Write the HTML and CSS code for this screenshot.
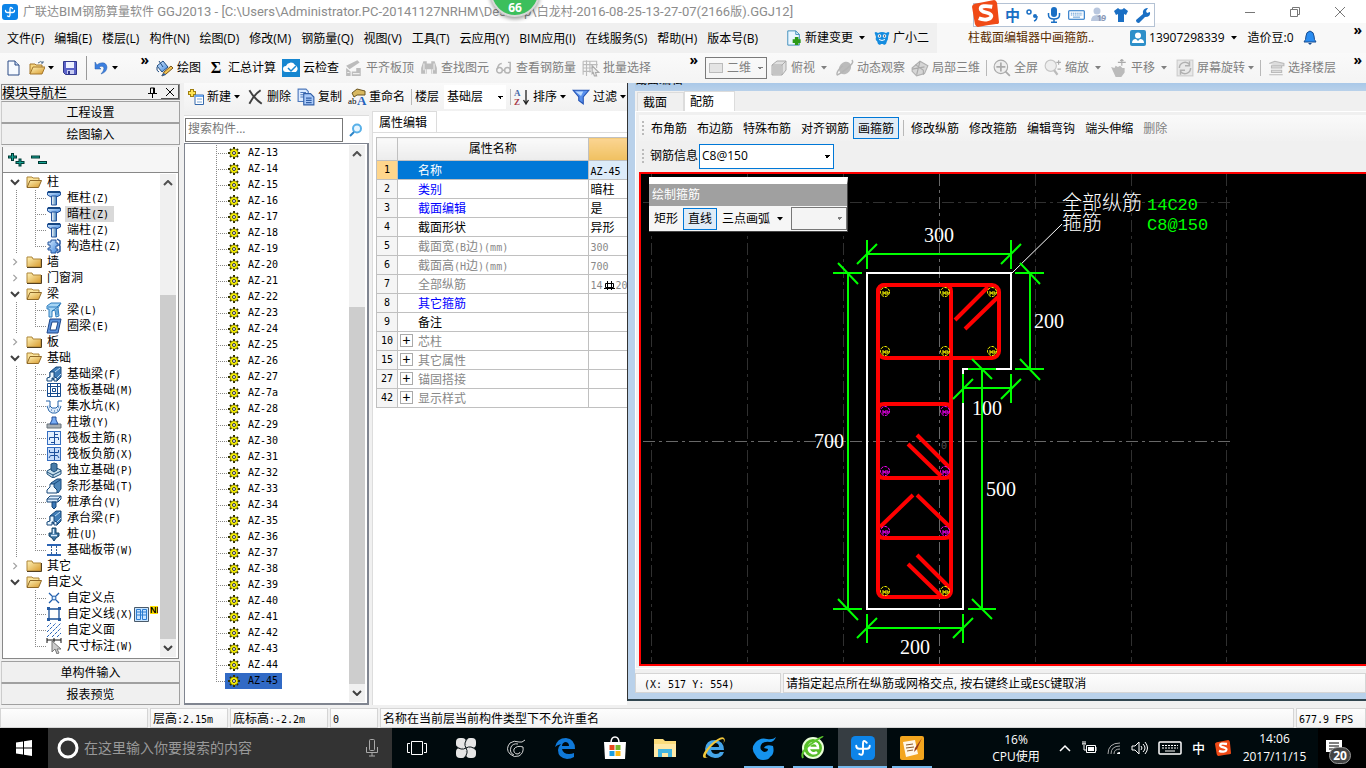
FILE: index.html
```html
<!DOCTYPE html>
<html lang="zh-CN">
<head>
<meta charset="utf-8">
<title>广联达BIM钢筋算量软件 GGJ2013</title>
<link rel="stylesheet" href="styles.css">
</head>
<body>
<svg class="defs" aria-hidden="true">
<defs>
<linearGradient id="gold" x1="0" y1="0" x2="1" y2="1"><stop offset="0" stop-color="#fff3b8"/><stop offset="1" stop-color="#d89a2c"/></linearGradient>
<linearGradient id="blue" x1="0" y1="0" x2="1" y2="1"><stop offset="0" stop-color="#d8ecff"/><stop offset="1" stop-color="#3f86dc"/></linearGradient>
<linearGradient id="steel" x1="0" y1="0" x2="1" y2="0"><stop offset="0" stop-color="#fff"/><stop offset="1" stop-color="#3f7fb8"/></linearGradient>
</defs>
<symbol id="logo" viewBox="0 0 16 16"><rect width="16" height="16" rx="3" fill="#0d84e8"/><path d="M10.500 4.500Q8 2 8 5v5.500q0 3-2.500 1.500M3.500 6.500q0 2 2 2h5q2 0 2-2" fill="none" stroke="#fff" stroke-width="1.300" stroke-linecap="round"/></symbol>
<symbol id="arrow" viewBox="0 0 6 4"><path d="M0 0h6L3 3.500z" fill="currentColor"/></symbol>
<symbol id="new" viewBox="0 0 16 16"><path d="M3 1h7l4 4v10H3z" fill="#f6faff" stroke="#2b4a85"/><path d="M10 1v4h4" fill="#c5d6ef" stroke="#2b4a85"/></symbol>
<symbol id="open" viewBox="0 0 16 16"><path d="M1 14V4h5l1 1h6v3" fill="#f6d680" stroke="#a5762a"/><path d="M1 14l3-7h12l-3 7z" fill="url(#gold)" stroke="#a5762a"/><path d="M9 3q3-3 5 0m0-2v2h-2" fill="none" stroke="#54718f"/></symbol>
<symbol id="save" viewBox="0 0 16 16"><path d="M1.500 1.500h13v13h-11l-2-2z" fill="#5b63c8" stroke="#30378c"/><path d="M4 2h8v6H4z" fill="#eef1ff"/><path d="M5 10h7v4H5z" fill="#c8cdf2"/><path d="M6 11h2v3H6z" fill="#30378c"/></symbol>
<symbol id="undo" viewBox="0 0 16 16"><path d="M2 2v7h6L6 7q4-2 5 1 0 3-3 6 6-2 6-7-1-5-6-4-2 0-4 2z" fill="#3c7fe0" stroke="#265ca8" stroke-width=".5"/></symbol>
<symbol id="paint" viewBox="0 0 18 16"><path d="M1 6l6-5 5 6-6 5z" fill="url(#blue)" stroke="#1f4b80"/><path d="M3 1l4 6M1 7q-1 4 2 5" fill="none" stroke="#1f4b80"/><path d="M8 12l7-6 2 2-7 6-4 2z" fill="#f4c451" stroke="#775318"/><path d="M8 13l-3 3 5-1" fill="#275eaa"/></symbol>
<symbol id="cloud" viewBox="0 0 18 18"><rect width="18" height="18" fill="#1686d0"/><path d="M4 13a3 3 0 0 1 0-6 5 5 0 0 1 9-1 4 4 0 0 1 1 7z" fill="#fff"/><path d="M6 9l3 3 5-5" fill="none" stroke="#1686d0" stroke-width="1.500"/></symbol>
<symbol id="align" viewBox="0 0 16 16"><path d="M1 6l10-5 2 2-9 6zM1 8l4 3v4H1zM6 11h4V8h4v7H6z" fill="#bcbcbc"/><path d="M7 13h6M2 12h2" stroke="#eee"/></symbol>
<symbol id="bino" viewBox="0 0 16 16"><path d="M3 2h3v2h4V2h3l2 6v5h-5V9H6v4H1V8z" fill="#bdbdbd"/><path d="M3.500 4v6m9-6v6M5 13V9m6 4V9" stroke="#eee"/></symbol>
<symbol id="glasses" viewBox="0 0 16 16"><g fill="none" stroke="#b5b5b5" stroke-width="1.300"><circle cx="4" cy="10" r="2.500"/><circle cx="11" cy="10" r="2.500"/><path d="M2 9q1-5 4-5M7 10h2M13.500 10V3h-2"/></g></symbol>
<symbol id="batch" viewBox="0 0 16 16"><path d="M1 2v12M4 1v14M7 2v10M1 5h13M1 8h8M1 11h7M1 2h12v6" fill="none" stroke="#bbb"/><path d="M9 6l6 6h-3l1 3-2 0-1-3-1 1z" fill="#eee" stroke="#aaa"/></symbol>
<symbol id="cube" viewBox="0 0 18 18"><path d="M2 6l5-4h9v9l-4 5H2z" fill="#e0e0e0" stroke="#aaa"/><path d="M2 6h10v10M12 6l4-4" fill="none" stroke="#aaa"/><path d="M3 7h8v8H3z" fill="#c4c4c4"/></symbol>
<symbol id="orbit" viewBox="0 0 16 16"><ellipse cx="8" cy="8" rx="5" ry="6" transform="rotate(40 8 8)" fill="#bbb"/><path d="M14 1q3 2-5 8t-8 5q-1-3 5-8" fill="none" stroke="#b5b5b5" stroke-width="1.300"/></symbol>
<symbol id="part" viewBox="0 0 16 16"><path d="M1 8l7-6 7 4-3 7-7 2-4-4z" fill="#d6d6d6" stroke="#b0b0b0"/><path d="M4 5l7 5v4M8 2l-3 12M1 9l11-2" fill="none" stroke="#aaa"/></symbol>
<symbol id="full" viewBox="0 0 16 16"><circle cx="7" cy="7" r="6" fill="#eee" stroke="#aaa"/><path d="M7 3v8M3 7h8M11 11l4 4" stroke="#aaa" stroke-width="1.500"/></symbol>
<symbol id="mag" viewBox="0 0 16 16"><circle cx="6" cy="6" r="5" fill="#eee" stroke="#c5c5c5"/><path d="M9 10l3 4" stroke="#bbb" stroke-width="2"/><path d="M11 3h4m-2-2v4m-1 4h3" stroke="#aaa"/></symbol>
<symbol id="pan" viewBox="0 0 16 16"><path d="M1 7l3 1 1-2 2 1 2-1 2 2 2 0v4l-3 4H5z" fill="#bbb"/><path d="M10.500 0v6M7 3h7M9 1.500l1.500-1 1.500 1" fill="none" stroke="#aaa"/></symbol>
<symbol id="rotate" viewBox="0 0 16 16"><rect x="1" y="1" width="14" height="14" fill="#e8e8e8" stroke="#ccc"/><path d="M3 8a5 5 0 0 1 9-3m1 3a5 5 0 0 1-9 3M12 2v4H8M4 14v-4h4" fill="none" stroke="#b0b0b0" stroke-width="1.300"/></symbol>
<symbol id="floors" viewBox="0 0 16 16"><path d="M2 4l5-2 8 2v2H7M4 6h9v2H4zM4 10h9v2H4zM2 14h12" fill="#ddd" stroke="#bbb"/></symbol>
<symbol id="create" viewBox="0 0 16 16"><path d="M4 0v8M0 4h8" stroke="#a08010" stroke-width="4"/><path d="M4 1v6M1 4h6" stroke="#ffe552" stroke-width="2"/><path d="M7 6h8.500v9.500H7z" fill="#fff" stroke="#3569ac"/><path d="M7 7h8" stroke="#69a5ee" stroke-width="2"/><path d="M9 10h5M9 13h5" stroke="#78a4d4"/></symbol>
<symbol id="delete" viewBox="0 0 16 16"><path d="M3 2q4 7 11 12M13 2Q7 6 3 14" fill="none" stroke="#404040" stroke-width="1.700"/></symbol>
<symbol id="copy" viewBox="0 0 16 16"><path d="M1 1h7l2 2v9H1z" fill="#dcebff" stroke="#4d78bb"/><path d="M3 4h5M3 6h5M3 8h5" stroke="#4d78bb"/><path d="M6 5h6l3 3v7H6z" fill="#a9c9f8" stroke="#315fa8"/><path d="M8 9h5M8 11h5M8 13h5" stroke="#315fa8"/></symbol>
<symbol id="filter" viewBox="0 0 16 16"><path d="M1 2h14L10 8v6l-4-3V8z" fill="#5990ed" stroke="#2554b4"/><path d="M3 3h7L8 7" fill="#bddbff"/></symbol>
<symbol id="docplus" viewBox="0 0 16 18"><path d="M1 1h9l4 4v12H1z" fill="#eaf6ff" stroke="#3286b8"/><path d="M10 1v4h4" fill="none" stroke="#3286b8"/><path d="M11 8v9M6.500 12.500h9" stroke="#2c9a18" stroke-width="4"/></symbol>
<symbol id="mascot" viewBox="0 0 16 16"><path d="M1 4q-1-2 1-2l2 1q4-2 8 0l2-1q2 0 1 2-1 2-1 4 0 2-1 3l-1 3-2 1-1-1H7l-1 1-2-1-1-3Q1 10 2 7z" fill="#158cdf"/><circle cx="5.500" cy="6" r="1.800" fill="#fff"/><circle cx="10.500" cy="6" r="1.800" fill="#fff"/><circle cx="5.500" cy="6" r=".8" fill="#124"/><circle cx="10.500" cy="6" r=".8" fill="#124"/><path d="M5 9.500q3 2 6 0" stroke="#fff" fill="none"/></symbol>
<symbol id="user" viewBox="0 0 16 16"><rect width="16" height="16" rx="2" fill="#2d8fc9"/><circle cx="8" cy="5.500" r="3" fill="#fff"/><path d="M2 13q0-4 4-4l2 2 2-2q4 0 4 4z" fill="#fff"/></symbol>
<symbol id="bell" viewBox="0 0 16 16"><path d="M2 12q2-2 2-6 0-4 4-5 4 1 4 5 0 4 2 6z" fill="#2a8cf0" stroke="#174d91"/><path d="M6 13h4l-2 2z" fill="#174d91"/></symbol>
<symbol id="folder" viewBox="0 0 16 16"><path d="M1 13V3h5l1 2h8v8z" fill="url(#gold)" stroke="#ad8538"/><path d="M1 13.500h14.500V5" fill="none" stroke="#544020"/></symbol>
<symbol id="folder-open" viewBox="0 0 16 16"><path d="M1 13V3h5l1 1h6v3" fill="#fbe39a" stroke="#ad8538"/><path d="M1 13.500l3-7h11.500l-3 7z" fill="url(#gold)" stroke="#8f6928"/></symbol>
<symbol id="down" viewBox="0 0 10 6"><path d="M1 1l4 4 4-4" fill="none" stroke="#404040" stroke-width="2"/></symbol>
<symbol id="up" viewBox="0 0 10 6"><path d="M1 5l4-4 4 4" fill="none" stroke="#505050" stroke-width="2"/></symbol>
<symbol id="right" viewBox="0 0 6 10"><path d="M1 1l4 4-4 4" fill="none" stroke="#a0a0a0" stroke-width="1.500"/></symbol>
<symbol id="column" viewBox="0 0 16 16"><path d="M1.500 2h13v3l-4 2H5L1.500 5z" fill="url(#blue)" stroke="#24549c"/><path d="M5.500 6h5v9h-5z" fill="url(#steel)" stroke="#24549c"/><path d="M2 2h12" stroke="#174783" stroke-width="2"/></symbol>
<symbol id="gear2" viewBox="0 0 16 16"><path d="M5 2h5v3h2v3h-2v3h2v2h-2v2H5v-3H2v-2h2V7H2V4h3z" fill="url(#blue)" stroke="#24549c"/><path d="M11 1l3 2v3l-1 1 1 1v5l-3 2" fill="none" stroke="#24549c" stroke-width="1.500"/></symbol>
<symbol id="beam" viewBox="0 0 16 16"><path d="M1 4l4-3h10l-3 5 1 8-3 1-1-7-3 1v6H3V7L1 7z" fill="#a5d5f5" stroke="#2f7dbd"/><path d="M2 5h9l3-3M6 9l6-4M11 7v6" fill="none" stroke="#2f7dbd"/></symbol>
<symbol id="ring" viewBox="0 0 16 16"><path d="M4 1h11l-3 14H1z" fill="#5c93dc" stroke="#1d4689"/><path d="M6 4h6l-2 8H4z" fill="#fff" stroke="#1d4689"/></symbol>
<symbol id="fbeam" viewBox="0 0 16 16"><path d="M4 12V6l6-5h5v10l-4 4z" fill="#3f7cb6" stroke="#164779"/><path d="M1 15v-3l3-1V6h4v5l3 1v3H8v-3H6v3z" fill="#e8f6ff" stroke="#164779"/><path d="M9 6l5-4M11 12l4-4" stroke="#bcdcf5"/></symbol>
<symbol id="strip" viewBox="0 0 16 16"><path d="M5 9V5l6-4h4v10l-3 4z" fill="#4d86ba" stroke="#164779"/><path d="M1 15v-3l3-3V6h4v3l3 3v3z" fill="#f2f9ff" stroke="#164779"/><path d="M8 6l6-4" stroke="#164779"/></symbol>
<symbol id="raft" viewBox="0 0 16 16"><path d="M1.500 1.500h13v13h-13zM4.500 1v14M11.500 1v14M1 4.500h14M1 11.500h14M6.500 6.500h3v3h-3z" fill="none" stroke="#164b8e"/></symbol>
<symbol id="pit" viewBox="0 0 16 16"><path d="M1 7h3l2 3h4l2-3h3l-3 6-4 2-4-2z" fill="#dceafa"/><path d="M0 3h4v5l2 2h4l2-2V3h4M1 8l2 5 3 2h4l3-2 2-5" fill="none" stroke="#2463a9"/><path d="M5 12h1m2 1h1m2-1h1m-9-3h1m8 0h1" stroke="#2463a9"/></symbol>
<symbol id="pier" viewBox="0 0 16 16"><path d="M1 10h14v4H1z" fill="#a8afb5" stroke="#68727a"/><path d="M4 10l2-4V3h4v3l2 4z" fill="#79adf5" stroke="#244f98"/></symbol>
<symbol id="rebar" viewBox="0 0 16 16"><rect x="1.500" y="1.500" width="13" height="13" fill="#e3f0ff" stroke="#356ec1"/><path d="M8.500 2v12M8 4.500h4M5 12.500h4M3.500 10V7.500h9V10" fill="none" stroke="#1d4f9b"/></symbol>
<symbol id="rebar-neg" viewBox="0 0 16 16"><rect x="1.500" y="1.500" width="13" height="13" fill="#c6dcfa" stroke="#356ec1"/><path d="M8.500 2v12M3.500 4v2.500h9V4M3 12l1.500-2.500h7L13 12" fill="none" stroke="#1d4f9b"/></symbol>
<symbol id="pad" viewBox="0 0 16 16"><path d="M1 9l7-4 7 3v4l-8 4-6-4z" fill="#c7dfed" stroke="#1c4e7a"/><path d="M5 2l3-1 3 1v6l-3 2-3-2z" fill="#487ca9" stroke="#1c4e7a"/><path d="M1 10l6 3 8-4M7 13v3" fill="none" stroke="#1c4e7a"/></symbol>
<symbol id="cap" viewBox="0 0 16 16"><path d="M1 5l3-3h11v3l-3 3H1z" fill="#dcedff" stroke="#164779"/><path d="M1 5h11v3M12 5l3-3" fill="none" stroke="#164779"/><path d="M6 8h4v5l-2 2-2-2z" fill="#3c78b8" stroke="#164779"/></symbol>
<symbol id="pile" viewBox="0 0 16 16"><path d="M6 2h4v5h3v3l-3 2-2 3-2-3-3-2V7h3z" fill="#39709f" stroke="#174568"/><path d="M7.500 3v5M5 9.500h6" stroke="#dcefff" stroke-width="1.500"/></symbol>
<symbol id="band" viewBox="0 0 16 16"><path d="M1 3h14M1 13h14" stroke="#2b64b5" stroke-width="2"/><path d="M5.500 4v9M10.500 4v9" stroke="#365f93" stroke-dasharray="2 1"/></symbol>
<symbol id="point" viewBox="0 0 16 16"><path d="M3 3l10 10M13 3L3 13" stroke="#1e5cab" stroke-width="1.300"/><circle cx="8" cy="8" r="2" fill="#d4ebff" stroke="#1e5cab"/></symbol>
<symbol id="poly" viewBox="0 0 16 16"><path d="M3 3h10v10H3z" fill="#fff" stroke="#194f95" stroke-width="1.300"/><path d="M1 1h3v3H1zM12 1h3v3h-3zM1 12h3v3H1zM12 12h3v3h-3z" fill="#255ba3"/></symbol>
<symbol id="hatch" viewBox="0 0 16 16"><path d="M1 5l4-4M1 10l9-9M1 15L15 1M6 15l9-9M11 15l4-4" stroke="#2864b8" stroke-dasharray="3 1"/></symbol>
<symbol id="dim" viewBox="0 0 16 16"><path d="M1 2h14M1 0v5M15 0v5M8 0v4" stroke="#111"/><path d="M6 3l9 8h-4l2 4-2 1-2-5-3 3z" fill="#ccc" stroke="#777"/></symbol>
<symbol id="az" viewBox="0 0 12 12"><path d="M6 0v12M0 6h12M2 2l8 8M10 2l-8 8" stroke="#333300" stroke-width="2"/><circle cx="6" cy="6" r="4" fill="#f5ef00" stroke="#4a4600" stroke-dasharray="1 1"/><circle cx="6" cy="6" r="1.500" fill="#fff" stroke="#333"/></symbol>
<symbol id="sogou" viewBox="0 0 28 28"><path d="M3 4q9-2 20-4 2 0 3 3l2 20q0 2-3 2-9 1-19 3-2 0-3-3L0 7q0-2 3-3z" fill="#f04a16"/><path d="M21 7q-12-2-12 2c0 5 12 3 11 8-1 4-8 4-13 2" fill="none" stroke="#fff" stroke-width="4"/></symbol>
<symbol id="mic" viewBox="0 0 16 16"><rect x="5" y="0" width="6" height="10" rx="3" fill="currentColor"/><path d="M2.500 6v2q0 4 5.500 4t5.500-4V6M8 12v3M5 15.200h6" fill="none" stroke="currentColor" stroke-width="1.500"/></symbol>
<symbol id="keys" viewBox="0 0 24 14"><rect x="1" y="1" width="22" height="12" rx="1" fill="none" stroke="currentColor" stroke-width="1.500"/><path d="M4 4.500h16M4 7h16" stroke="currentColor" stroke-dasharray="2 1"/><path d="M7 10h10" stroke="currentColor"/></symbol>
<symbol id="bar" viewBox="-6 -6 12 12"><circle r="4.500" fill="none" stroke="currentColor" stroke-dasharray="3 1"/><path d="M-3 0h2v2h-2M0 0h3v2H0z" fill="none" stroke="currentColor"/></symbol>
</svg>

<header class="titlebar">
  <svg class="i16"><use href="#logo"/></svg>
  <h1><span>广联达</span>BIM<span>钢筋算量软件</span> GGJ2013 - [C:\Users\Administrator.PC-20141127NRHM\Desktop\<span>白龙村</span>-2016-08-25-13-27-07(2166<span>版</span>).GGJ12]</h1>
  <div class="window-controls">
    <button aria-label="最小化"><svg width="10" height="10"><path d="M0 5.500h10" stroke="#777"/></svg></button>
    <button aria-label="还原"><svg width="10" height="10"><path d="M.5 2.500h7v7h-7zM2.500 2V.5h7v7H8" fill="none" stroke="#777"/></svg></button>
    <button aria-label="关闭"><svg width="10" height="10"><path d="M0 0l10 10M10 0L0 10" stroke="#777"/></svg></button>
  </div>
</header>
<div class="ball">66</div>
<div class="ime">
  <svg class="ime-logo"><use href="#sogou"/></svg>
  <b>中</b>
  <svg width="14" height="14"><circle cx="3" cy="4" r="2" fill="none" stroke="currentColor" stroke-width="1.500"/><circle cx="9" cy="8" r="2" fill="currentColor"/><path d="M11 8q0 4-3 5" fill="none" stroke="currentColor" stroke-width="1.500"/></svg>
  <svg class="i16"><use href="#mic"/></svg>
  <svg width="17" height="12"><use href="#keys"/></svg>
  <svg class="pale" width="16" height="16"><circle cx="6" cy="4" r="3.500" fill="currentColor"/><path d="M0 14q0-6 6-6t6 6z" fill="currentColor"/><text x="6" y="14" font-size="8" font-weight="700" fill="#8797b5">19</text></svg>
  <svg width="16" height="16"><path d="M5 1q3 3 6 0l4 3-2 4-2-1v8H5V7L3 8 1 4z" fill="currentColor"/></svg>
  <svg width="16" height="16"><path d="M1 13l7-6q-1-5 4-6l1 0-2 3 1 2 3-1q1 5-5 5l-6 6q-3 0-3-3z" fill="currentColor"/></svg>
</div>

<nav class="menubar">
  <div class="menus">
    <button>文件(F)</button><button>编辑(E)</button><button>楼层(L)</button><button>构件(N)</button><button>绘图(D)</button><button>修改(M)</button><button>钢筋量(Q)</button><button>视图(V)</button><button>工具(T)</button><button>云应用(Y)</button><button>BIM应用(I)</button><button>在线服务(S)</button><button>帮助(H)</button><button>版本号(B)</button>
  </div>
  <button class="tool"><svg class="i16"><use href="#docplus"/></svg>新建变更<svg class="arr"><use href="#arrow"/></svg></button>
  <button class="tool"><svg class="i16"><use href="#mascot"/></svg>广小二</button>
  <a class="news" href="#">柱截面编辑器中画箍筋..</a>
  <div class="account">
    <button class="tool"><svg class="i16"><use href="#user"/></svg>13907298339<svg class="arr"><use href="#arrow"/></svg></button>
    <span>造价豆:0</span>
    <svg class="bell"><use href="#bell"/></svg>
    <button class="more">»</button>
  </div>
</nav>

<div class="toolbar main-tools">
  <div class="group files">
    <button class="tool" aria-label="新建"><svg class="i16"><use href="#new"/></svg></button>
    <button class="tool" aria-label="打开"><svg class="i16"><use href="#open"/></svg><svg class="arr tight"><use href="#arrow"/></svg></button>
    <button class="tool" aria-label="保存"><svg class="i16"><use href="#save"/></svg></button>
    <i class="sep"></i>
    <button class="tool" aria-label="撤销"><svg class="i16"><use href="#undo"/></svg><svg class="arr tight"><use href="#arrow"/></svg></button>
    <button class="more">»</button>
  </div>
  <div class="group edits">
    <button class="tool"><svg class="i18"><use href="#paint"/></svg>绘图</button>
    <button class="tool"><b class="sigma">Σ</b>汇总计算</button>
    <button class="tool"><svg class="i18"><use href="#cloud"/></svg>云检查</button>
    <button class="tool" disabled><svg class="i18"><use href="#align"/></svg>平齐板顶</button>
    <button class="tool" disabled><svg class="i18"><use href="#bino"/></svg>查找图元</button>
    <button class="tool" disabled><svg class="i18"><use href="#glasses"/></svg>查看钢筋量</button>
    <button class="tool" disabled><svg class="i18"><use href="#batch"/></svg>批量选择</button>
    <button class="more">»</button>
  </div>
  <div class="group views">
    <label class="view-mode"><i></i><select aria-label="视图" disabled><option>二维</option></select></label>
    <button class="tool" disabled><svg class="i18"><use href="#cube"/></svg>俯视<svg class="arr"><use href="#arrow"/></svg></button>
    <button class="tool" disabled><svg class="i18"><use href="#orbit"/></svg>动态观察</button>
    <button class="tool" disabled><svg class="i18"><use href="#part"/></svg>局部三维</button>
    <i class="sep"></i>
    <button class="tool" disabled><svg class="i18"><use href="#full"/></svg>全屏</button>
    <button class="tool" disabled><svg class="i18"><use href="#mag"/></svg>缩放<svg class="arr"><use href="#arrow"/></svg></button>
    <button class="tool" disabled><svg class="i18"><use href="#pan"/></svg>平移<svg class="arr"><use href="#arrow"/></svg></button>
    <button class="tool" disabled><svg class="i18"><use href="#rotate"/></svg>屏幕旋转<svg class="arr tight"><use href="#arrow"/></svg></button>
    <i class="sep"></i>
    <button class="tool" disabled><svg class="i18"><use href="#floors"/></svg>选择楼层</button>
    <button class="more">»</button>
  </div>
</div>

<main class="workspace">
  <aside class="nav">
    <div class="nav-head"><h2>模块导航栏</h2>
      <button class="pin" aria-label="固定"><svg width="9" height="11"><path d="M2.500 6V1h4v5M5.500 1v5M0 6.500h9M4.500 7v4" fill="none" stroke="#000"/></svg></button>
      <button class="shut" aria-label="关闭"><svg width="8" height="8"><path d="M0 0l8 8M8 0L0 8" stroke="#000"/></svg></button></div>
    <button class="section">工程设置</button>
    <button class="section">绘图输入</button>
    <div class="nav-box">
      <div class="expanders">
        <button aria-label="全部展开"><svg width="18" height="16"><path d="M4.500 1v8M0 5h9M12 6.500v8M7.500 10.500h9" stroke="#003a34" stroke-width="3"/><path d="M4.500 2v6M1 5h7M12 7.500v6M8.500 10.500h7" stroke="#16a596"/></svg></button>
        <button aria-label="全部折叠"><svg width="18" height="16"><path d="M0 5h9M7 10.500h9" stroke="#003a34" stroke-width="3"/><path d="M1 5h7M8 10.500h7" stroke="#16a596"/></svg></button>
      </div>
      <div class="scroll-area">
        <ul class="tree">
          <li><div class="node"><svg class="exp"><use href="#down"/></svg><svg class="i16"><use href="#folder-open"/></svg>柱</div>
            <ul>
              <li><svg class="i16"><use href="#column"/></svg><span>框柱<tt>(Z)</tt></span></li>
              <li><svg class="i16"><use href="#column"/></svg><span class="current">暗柱<tt>(Z)</tt></span></li>
              <li><svg class="i16"><use href="#column"/></svg><span>端柱<tt>(Z)</tt></span></li>
              <li><svg class="i16"><use href="#gear2"/></svg><span>构造柱<tt>(Z)</tt></span></li>
            </ul></li>
          <li><div class="node"><svg class="exp"><use href="#right"/></svg><svg class="i16"><use href="#folder"/></svg>墙</div></li>
          <li><div class="node"><svg class="exp"><use href="#right"/></svg><svg class="i16"><use href="#folder"/></svg>门窗洞</div></li>
          <li><div class="node"><svg class="exp"><use href="#down"/></svg><svg class="i16"><use href="#folder-open"/></svg>梁</div>
            <ul>
              <li><svg class="i16"><use href="#beam"/></svg><span>梁<tt>(L)</tt></span></li>
              <li><svg class="i16"><use href="#ring"/></svg><span>圈梁<tt>(E)</tt></span></li>
            </ul></li>
          <li><div class="node"><svg class="exp"><use href="#right"/></svg><svg class="i16"><use href="#folder"/></svg>板</div></li>
          <li><div class="node"><svg class="exp"><use href="#down"/></svg><svg class="i16"><use href="#folder-open"/></svg>基础</div>
            <ul>
              <li><svg class="i16"><use href="#fbeam"/></svg><span>基础梁<tt>(F)</tt></span></li>
              <li><svg class="i16"><use href="#raft"/></svg><span>筏板基础<tt>(M)</tt></span></li>
              <li><svg class="i16"><use href="#pit"/></svg><span>集水坑<tt>(K)</tt></span></li>
              <li><svg class="i16"><use href="#pier"/></svg><span>柱墩<tt>(Y)</tt></span></li>
              <li><svg class="i16"><use href="#rebar"/></svg><span>筏板主筋<tt>(R)</tt></span></li>
              <li><svg class="i16"><use href="#rebar-neg"/></svg><span>筏板负筋<tt>(X)</tt></span></li>
              <li><svg class="i16"><use href="#pad"/></svg><span>独立基础<tt>(P)</tt></span></li>
              <li><svg class="i16"><use href="#strip"/></svg><span>条形基础<tt>(T)</tt></span></li>
              <li><svg class="i16"><use href="#cap"/></svg><span>桩承台<tt>(V)</tt></span></li>
              <li><svg class="i16"><use href="#fbeam"/></svg><span>承台梁<tt>(F)</tt></span></li>
              <li><svg class="i16"><use href="#pile"/></svg><span>桩<tt>(U)</tt></span></li>
              <li><svg class="i16"><use href="#band"/></svg><span>基础板带<tt>(W)</tt></span></li>
            </ul></li>
          <li><div class="node"><svg class="exp"><use href="#right"/></svg><svg class="i16"><use href="#folder"/></svg>其它</div></li>
          <li><div class="node"><svg class="exp"><use href="#down"/></svg><svg class="i16"><use href="#folder-open"/></svg>自定义</div>
            <ul>
              <li><svg class="i16"><use href="#point"/></svg><span>自定义点</span></li>
              <li><svg class="i16"><use href="#poly"/></svg><span>自定义线<tt>(X)</tt></span><svg width="15" height="15"><path d="M.5.5h14v14H.5z" fill="#c8e4ff" stroke="#4a5a6a"/><path d="M2.500 2.500h4v10h-4zM8.500 2.500h4v10h-4zM2 5h10M2 8h10" fill="none" stroke="#2c7cd0"/></svg><em>NE</em></li>
              <li><svg class="i16"><use href="#hatch"/></svg><span>自定义面</span></li>
              <li><svg class="i16"><use href="#dim"/></svg><span>尺寸标注<tt>(W)</tt></span></li>
            </ul></li>
        </ul>
        <div class="scrollbar"><svg><use href="#up"/></svg><i class="thumb nav-thumb"></i><svg><use href="#down"/></svg></div>
      </div>
    </div>
    <button class="section">单构件输入</button>
    <button class="section">报表预览</button>
  </aside>

  <div class="center">
    <div class="toolbar comp-tools">
      <button class="tool"><svg class="i16"><use href="#create"/></svg>新建<svg class="arr tight"><use href="#arrow"/></svg></button>
      <button class="tool"><svg class="i18"><use href="#delete"/></svg>删除</button>
      <button class="tool"><svg class="i18"><use href="#copy"/></svg>复制</button>
      <button class="tool"><svg class="i18 letters" viewBox="0 0 18 18"><path d="M4 5l5-4 8 2v4H9L6 9z" fill="#d8b860" stroke="#6b5520"/><text x="0" y="16" font-size="9">ab</text><text x="9" y="17" font-size="13" font-weight="700" fill="#2562bd">A</text></svg>重命名</button>
      <i class="sep"></i>
      <label for="floor">楼层</label>
      <select id="floor" class="floor"><option>基础层</option></select>
      <i class="sep"></i>
      <button class="tool"><svg class="i16 letters" viewBox="0 0 16 16"><text x="0" y="7" font-size="9" font-weight="700" fill="#4469a8">A</text><text x="0" y="16" font-size="9" font-weight="700" fill="#a83c4a">Z</text><path d="M12 1v13M9.500 11l2.500 4 2.500-4" fill="none" stroke="#222" stroke-width="1.300"/></svg>排序<svg class="arr tight"><use href="#arrow"/></svg></button>
      <button class="tool"><svg class="i18"><use href="#filter"/></svg>过滤<svg class="arr tight"><use href="#arrow"/></svg></button>
    </div>
    <div class="panes">
      <section class="components">
        <div class="search"><input type="text" aria-label="搜索构件" placeholder="搜索构件..."><button aria-label="搜索"><svg width="14" height="14"><circle cx="8" cy="5.500" r="4" fill="#e6f5ff" stroke="#58b0e8" stroke-width="2"/><path d="M5 9l-4 4" stroke="#2b84c8" stroke-width="2"/></svg></button></div>
        <div class="scroll-area list-box">
          <ul class="az">
            <li><svg><use href="#az"/></svg>AZ-13</li><li><svg><use href="#az"/></svg>AZ-14</li><li><svg><use href="#az"/></svg>AZ-15</li><li><svg><use href="#az"/></svg>AZ-16</li><li><svg><use href="#az"/></svg>AZ-17</li><li><svg><use href="#az"/></svg>AZ-18</li><li><svg><use href="#az"/></svg>AZ-19</li><li><svg><use href="#az"/></svg>AZ-20</li><li><svg><use href="#az"/></svg>AZ-21</li><li><svg><use href="#az"/></svg>AZ-22</li><li><svg><use href="#az"/></svg>AZ-23</li><li><svg><use href="#az"/></svg>AZ-24</li><li><svg><use href="#az"/></svg>AZ-25</li><li><svg><use href="#az"/></svg>AZ-26</li><li><svg><use href="#az"/></svg>AZ-27</li><li><svg><use href="#az"/></svg>AZ-7a</li><li><svg><use href="#az"/></svg>AZ-28</li><li><svg><use href="#az"/></svg>AZ-29</li><li><svg><use href="#az"/></svg>AZ-30</li><li><svg><use href="#az"/></svg>AZ-31</li><li><svg><use href="#az"/></svg>AZ-32</li><li><svg><use href="#az"/></svg>AZ-33</li><li><svg><use href="#az"/></svg>AZ-34</li><li><svg><use href="#az"/></svg>AZ-35</li><li><svg><use href="#az"/></svg>AZ-36</li><li><svg><use href="#az"/></svg>AZ-37</li><li><svg><use href="#az"/></svg>AZ-38</li><li><svg><use href="#az"/></svg>AZ-39</li><li><svg><use href="#az"/></svg>AZ-40</li><li><svg><use href="#az"/></svg>AZ-41</li><li><svg><use href="#az"/></svg>AZ-42</li><li><svg><use href="#az"/></svg>AZ-43</li><li><svg><use href="#az"/></svg>AZ-44</li><li class="picked"><span><svg><use href="#az"/></svg>AZ-45</span></li>
          </ul>
          <div class="scrollbar"><svg><use href="#up"/></svg><i class="thumb az-thumb"></i><svg><use href="#down"/></svg></div>
        </div>
      </section>
      <section class="properties">
        <div class="tabs"><button class="tab on">属性编辑</button></div>
        <div class="prop-box">
          <table>
            <thead><tr><th class="no"></th><th>属性名称</th><th class="val"></th></tr></thead>
            <tbody>
              <tr class="sel"><td>1</td><td>名称</td><td><tt>AZ-45</tt></td></tr>
              <tr class="key"><td>2</td><td>类别</td><td>暗柱</td></tr>
              <tr class="key"><td>3</td><td>截面编辑</td><td>是</td></tr>
              <tr><td>4</td><td>截面形状</td><td>异形</td></tr>
              <tr class="dim"><td>5</td><td>截面宽<tt>(B</tt>边<tt>)(mm)</tt></td><td><tt>300</tt></td></tr>
              <tr class="dim"><td>6</td><td>截面高<tt>(H</tt>边<tt>)(mm)</tt></td><td><tt>700</tt></td></tr>
              <tr class="dim"><td>7</td><td>全部纵筋</td><td><tt>14</tt><svg class="grade" width="11" height="11"><path d="M3.500 1v9M7.500 1v9M0 8.500h11M1.500 3.500h8v4h-8z" fill="none" stroke="#000"/></svg><tt>20</tt></td></tr>
              <tr class="key"><td>8</td><td>其它箍筋</td><td></td></tr>
              <tr><td>9</td><td>备注</td><td></td></tr>
              <tr class="dim fold"><td>10</td><td><button>+</button>芯柱</td><td></td></tr>
              <tr class="dim fold"><td>15</td><td><button>+</button>其它属性</td><td></td></tr>
              <tr class="dim fold"><td>27</td><td><button>+</button>锚固搭接</td><td></td></tr>
              <tr class="dim fold"><td>42</td><td><button>+</button>显示样式</td><td></td></tr>
            </tbody>
          </table>
        </div>
      </section>
    </div>
  </div>

  <section class="dialog">
    <div class="dialog-title"><span>截面编辑</span></div>
    <div class="dialog-body">
      <div class="tabs"><button class="tab">截面</button><button class="tab on">配筋</button></div>
      <div class="sheet">
        <div class="toolbar rebar-tools"><i class="grip"></i>
          <button>布角筋</button><button>布边筋</button><button>特殊布筋</button><button>对齐钢筋</button><button class="active">画箍筋</button><i class="sep"></i><button>修改纵筋</button><button>修改箍筋</button><button>编辑弯钩</button><button>端头伸缩</button><button disabled>删除</button></div>
        <div class="toolbar info-tools"><i class="grip"></i><label for="info">钢筋信息</label><select id="info" class="info"><option>C8@150</option></select></div>
        <div class="canvas">
          <svg class="drawing" viewBox="641 174 725 490" preserveAspectRatio="xMinYMin meet">
            <g stroke="#303030" stroke-dasharray="12 4 3 4"><path d="M651.500 174v488M747.500 174v488M843.500 174v488M1035.500 174v488M1131.500 174v488M1226.500 174v488M643 202.500h591"/><path d="M939.500 174v490M643 441.500h591" stroke="#686868"/></g>
            <path d="M867 273h144v96h-48v240h-96z" fill="none" stroke="#fff" stroke-width="2"/>
            <path d="M1012 273l50-49" stroke="#fff"/>
            <text class="origin" x="941" y="449">0</text>
            <g fill="none" stroke="#f00" stroke-width="4"><rect x="878" y="285" width="121" height="73" rx="7"/><rect x="878" y="285" width="73" height="312" rx="6"/><path d="M878 410q0-6 6-6h61q6 0 6 6M878 472q0 6 6 6h61q6 0 6-6M878 532q0 6 6 6h61q6 0 6-6"/><path d="M988 287l-33 33M998 297l-33 32M917 435l33 33M908 444l33 32M880 527l33-32M917 495l33 32M917 555l33 33M908 564l33 32"/></g>
            <g class="bars-y"><use href="#bar" x="879" y="286" width="12" height="12"/><use href="#bar" x="939" y="286" width="12" height="12"/><use href="#bar" x="986" y="286" width="12" height="12"/><use href="#bar" x="879" y="345" width="12" height="12"/><use href="#bar" x="939" y="345" width="12" height="12"/><use href="#bar" x="986" y="345" width="12" height="12"/><use href="#bar" x="879" y="585" width="12" height="12"/><use href="#bar" x="939" y="585" width="12" height="12"/></g>
            <g class="bars-m"><use href="#bar" x="879" y="405" width="12" height="12"/><use href="#bar" x="939" y="405" width="12" height="12"/><use href="#bar" x="879" y="465" width="12" height="12"/><use href="#bar" x="939" y="465" width="12" height="12"/><use href="#bar" x="879" y="525" width="12" height="12"/><use href="#bar" x="939" y="525" width="12" height="12"/></g>
            <g fill="none" stroke="#0f0" stroke-width="2"><path d="M867 254h144M867 240v29M1011 240v29M857 264l20-20M1001 264l20-20"/><path d="M848 273v336M833 273h29M833 609h29M838 263l20 21M838 599l20 21"/><path d="M1030 273v96M1015 273h29M1015 369h29M1020 263l20 21M1020 359l20 21"/><path d="M963 388h48M963 374v29M1011 374v29M953 399l20-20M1001 399l20-20"/><path d="M982 369v240M968 369h28M968 609h28M972 359l20 20M972 599l20 20"/><path d="M867 628h96M867 614v29M963 614v29M857 638l20-20M953 638l20-20"/></g>
            <g class="figures"><text x="924" y="242">300</text><text x="1034" y="328">200</text><text x="972" y="415">100</text><text x="814" y="448">700</text><text x="986" y="496">500</text><text x="900" y="654">200</text></g>
            <g class="notes"><text x="1062" y="210">全部纵筋</text><text x="1062" y="230">箍筋</text></g>
            <g class="codes"><text x="1147" y="210">14C20</text><text x="1147" y="230">C8@150</text></g>
          </svg>
          <div class="palette">
            <h3>绘制箍筋</h3>
            <div class="palette-row"><button>矩形</button><button class="active">直线</button><button>三点画弧<svg class="arr"><use href="#arrow"/></svg></button><select aria-label="画弧参数" disabled><option></option></select></div>
          </div>
        </div>
      </div>
      <footer class="status dialog-status"><span class="coords"><tt>(X: 517 Y: 554)</tt></span><span class="grow">请指定起点所在纵筋或网格交点, 按右键终止或<tt>ESC</tt>键取消</span></footer>
    </div>
  </section>
</main>

<footer class="status app-status"><span class="s1"></span><span class="s2">层高<tt>:2.15m</tt></span><span class="s3">底标高<tt>:-2.2m</tt></span><span class="s4"><tt>0</tt></span><span class="grow">名称在当前层当前构件类型下不允许重名</span><span class="s5"><tt>677.9 FPS</tt></span></footer>

<footer class="taskbar">
  <button class="start" aria-label="开始"><svg width="16" height="16"><path d="M0 2.500l7-1v6H0zM8 1.300L16 0v7.500H8zM0 8.500h7v6l-7-1zM8 8.500h8V16l-8-1.300z" fill="#fff"/></svg></button>
  <label class="find"><svg width="22" height="22"><circle cx="11" cy="11" r="9" fill="none" stroke="#fff" stroke-width="3"/></svg><input type="text" aria-label="搜索" placeholder="在这里输入你要搜索的内容"><svg width="12" height="18"><rect x="3.500" y=".5" width="5" height="11" rx="1" fill="none" stroke="#aaa"/><path d="M.5 8v5.500h11V8M6 14v3M3 17h6" fill="none" stroke="#aaa"/></svg></label>
  <div class="apps">
    <button aria-label="任务视图"><svg width="20" height="16"><path d="M4.500 1.500h11v13h-11zM3 3.500H.5v9H3M17 3.500h2.500v9H17" fill="none" stroke="#fff"/></svg></button>
    <button aria-label="四叶草"><svg width="22" height="22"><g fill="#e6e6e6"><rect x="1" y="1" width="10" height="10" rx="4"/><rect x="11" y="1" width="10" height="10" rx="4"/><rect x="1" y="11" width="10" height="10" rx="4"/><rect x="11" y="11" width="10" height="10" rx="4"/><rect x="8" y="8" width="6" height="6"/></g><path d="M13 1q-5 5-2 10t-2 10M1 9q5 5 10 2t10 2" fill="none" stroke="#0a1418"/></svg></button>
    <button aria-label="广联达G"><svg width="20" height="20"><path d="M19 2q-3 3-6 2-5-2-9 1-5 6 0 11 4 4 9 2 5-3 4-9-6-2-9 2-1 4 3 5 3 0 3-2M12 6q-5-1-7 3-2 6 3 8" fill="none" stroke="#d5d5d5"/></svg></button>
    <button aria-label="Edge"><svg width="22" height="22"><path d="M1 10Q3 1 12 1q9 1 9 11H8q1 5 7 5 3 0 5-1v4q-3 2-7 2-9-1-9-9 0-3 3-6-4 1-6 3M8 9h7q0-4-4-4-3 1-3 4" fill="#0f79d9"/></svg></button>
    <button aria-label="应用商店"><svg width="24" height="24"><path d="M8 7q0-6 4-6t4 6" fill="none" stroke="#fff" stroke-width="1.500"/><path d="M1 6h22l-1 17H2z" fill="#fff"/><path d="M6.500 9h5v5h-5z" fill="#e8491d"/><path d="M12.500 9h5v5h-5z" fill="#76b82a"/><path d="M6.500 15h5v5h-5z" fill="#1a9de0"/><path d="M12.500 15h5v5h-5z" fill="#fcb813"/></svg></button>
    <button aria-label="文件资源管理器"><svg width="22" height="20"><path d="M0 1h9l2 2h11v16H0z" fill="#fbdc7c"/><path d="M0 6h22v13H0z" fill="#ffe9a6"/><path d="M4 19v-8h14v8h-4v-4H8v4z" fill="#43b5e0"/></svg></button>
    <button aria-label="IE"><svg width="24" height="24"><path d="M3 13Q4 4 13 4q9 1 9 10H9q1 4 5 4 3 0 4-2h4q-2 6-9 6-9-1-10-9M9 11h8q0-4-4-4t-4 4" fill="#45a5e8"/><path d="M3 22Q-3 21 8 9 19-1 22 2q2 2-1 6 2-4 0-5Q17 3 9 11 0 22 6 21z" fill="#f1c73b"/></svg></button>
    <button class="run" aria-label="广联达"><svg width="24" height="24"><path d="M24 1q-2 5-6 5-7-1-9 3-2 5 3 7 4 0 4-3l-4-1q2-4 9-2 2 8-3 11 -1 3-7 3-5 0-7-4Q-2 13 3 7 8 1 15 3q6 1 9-2z" fill="#1593ee"/></svg></button>
    <button class="run" aria-label="360浏览器"><svg width="24" height="24"><circle cx="12" cy="12" r="10" fill="#57bd28" stroke="#e9ffd8" stroke-width="2"/><path d="M16 16q-2 2-5 1-4-2-3-6 1-4 5-4t4 5H8" fill="none" stroke="#fff" stroke-width="2.500"/><path d="M2 22Q-1 16 10 8T22 1" fill="none" stroke="#5cc72e" stroke-width="2"/></svg></button>
    <button class="run front" aria-label="GGJ2013"><svg width="24" height="24"><use href="#logo"/></svg></button>
    <button class="run" aria-label="写字板"><svg width="24" height="24"><rect width="24" height="24" rx="2" fill="#f3a51e"/><path d="M3 6l12-2 3 14-12 3z" fill="#fff7e8"/><path d="M6 9l7-1M6 12l8-1M7 15l6-1" stroke="#8b5a2b"/><path d="M22 2l-7 10-1 4 3-3z" fill="#9b3c18"/></svg></button>
  </div>
  <div class="cpu">16%<br>CPU使用</div>
  <div class="tray">
    <svg width="12" height="8"><path d="M1 7l5-5 5 5" fill="none" stroke="#fff" stroke-width="1.500"/></svg>
    <svg width="16" height="14"><path d="M5.500 4.500h9v7h-9zM15 6v4M1 3h4M2 0v3M4 0v3M3 4v5h2" fill="none" stroke="#fff"/><path d="M7 6h6v4H7z" fill="#fff"/></svg>
    <svg width="14" height="14"><path d="M1 13Q1 2 13 2M4 13q0-8 9-8M7 13q0-5 6-5" fill="none" stroke="#aaa"/><path d="M10 13q0-2 3-2v2z" fill="#fff"/></svg>
    <svg width="17" height="14"><path d="M1 5h3l4-4v12L4 9H1zM10 5q2 2 0 4M12 3q4 4 0 8M14 1q5 6 0 12" fill="none" stroke="#fff"/></svg>
    <svg width="24" height="14"><use href="#keys"/></svg>
    <b>中</b>
    <svg width="16" height="16"><use href="#sogou"/></svg>
  </div>
  <div class="clock">14:06<br>2017/11/15</div>
  <button class="notify" aria-label="通知"><svg width="16" height="16"><path d="M0 0h16v12H8l-4 4v-4H0z" fill="#fff"/><path d="M3 3h10M3 6h10M3 9h6" stroke="#000"/></svg><span>20</span></button>
</footer>
</body>
</html>
```
FILE: styles.css
```css
* { box-sizing: border-box; }
body {
  margin: 0;
  min-height: 100vh;
  display: flex;
  flex-direction: column;
  background: #f0f0f0;
  color: #000;
  font: 12px/16px "Open Sans", "Noto Sans CJK SC", sans-serif;
  overflow-x: hidden;
}
button, input, select { font: inherit; color: inherit; margin: 0; padding: 0; border: 0; background: none; border-radius: 0; }
button { white-space: nowrap; }
button:disabled, select:disabled { color: #808080; opacity: 1; }
select {
  appearance: none;
  background-image: linear-gradient(45deg, transparent 50%, currentColor 50%), linear-gradient(-45deg, transparent 50%, currentColor 50%);
  background-size: 3px 3px;
  background-repeat: no-repeat;
  background-position: right 6px center, right 3px center;
}
h1, h2, h3 { margin: 0; font: inherit; }
ul { margin: 0; padding: 0; list-style: none; }
svg { flex: none; display: block; }
tt { font: 10px/14px "DejaVu Sans Mono", monospace; }
.defs { position: absolute; width: 0; height: 0; }
.i16 { width: 16px; height: 16px; }
.i18 { width: 18px; height: 18px; }
.letters { overflow: visible; font-family: "Liberation Serif", serif; }
.arr { width: 6px; height: 4px; margin: 0 3px; }
.arr.tight { margin: 0; }

.titlebar { display: flex; align-items: center; height: 23px; padding-left: 2px; gap: 5px; background: #fff; }
.titlebar h1 { flex: 1; color: #8c8c8c; white-space: nowrap; font: 13px/20px Roboto, "Noto Sans CJK SC", sans-serif; }
.titlebar span { font-size: 12px; }
.window-controls { display: flex; margin-right: 4px; }
.window-controls button { width: 45px; height: 20px; display: grid; place-items: center; }
.ball {
  position: absolute; left: 490px; top: -33px; width: 50px; height: 50px; padding-top: 31px;
  border-radius: 50%; border: 2px solid #d8d8d8; background: #3cbf5c; box-shadow: 0 2px 4px #0006;
  color: #fff; text-align: center; font-weight: 700; line-height: 16px;
}
.ime {
  position: absolute; right: 211px; top: 3px; height: 24px; padding: 0 3px 0 2px;
  display: flex; align-items: center; gap: 6px; background: #fff; border: 1px solid #b4c2d4; color: #1a6fc4;
}
.ime b { font-size: 15px; }
.ime-logo { width: 27px; height: 27px; margin: -4px 0 0 -4px; }
.pale { color: #b9c7de; overflow: visible; }

.menubar { display: flex; align-items: stretch; height: 30px; }
.menubar > * { flex: none; }
.menus { display: flex; width: 786px; padding-left: 7px; gap: 10px; }
.menus button { padding-top: 1px; }
.tool { display: flex; align-items: center; gap: 3px; margin-right: 6px; }
.news { width: 188px; margin-left: 2px; text-align: center; line-height: 30px; color: #5c2e00; text-decoration: none; background: #f8f8f8; }
.account { flex: 1 !important; display: flex; align-items: center; background: #f8f8f8; padding-left: 5px; }
.account span { margin-left: 2px; }
.bell { width: 16px; height: 16px; margin-left: 8px; }
.more { align-self: flex-start; margin-left: auto; font: 700 14px/14px "Open Sans", sans-serif; padding: 0 4px; }

.toolbar { background: linear-gradient(#fafafa, #f1f1f1); display: flex; align-items: center; }
.main-tools { height: 30px; align-items: stretch; background: linear-gradient(#fafafa, #f4f4f4); }
.group { display: flex; align-items: center; }
.files { width: 153px; padding-left: 5px; gap: 2px; }
.files .sep { height: 24px; margin-right: 4px; background: #999; }
.edits { width: 549px; padding-left: 3px; }
.views { flex: 1; padding-left: 3px; }
.sigma { width: 18px; text-align: center; font: 700 16px/16px "Liberation Serif", serif; }
.sep { width: 1px; height: 16px; margin-right: 6px; background: #b8b8b8; }
.view-mode { display: flex; align-items: center; width: 62px; height: 22px; padding-left: 3px; gap: 4px; border: 1px solid #7a7a7a; margin-right: 3px; }
.view-mode i { width: 14px; height: 10px; border: 1px solid #bbb; background: #e4e4e4; }
.view-mode select { flex: 1; }

.workspace { flex: 1; display: flex; }
.nav { width: 179px; margin: 1px 0 3px 1px; display: flex; flex-direction: column; }
.nav-head { display: flex; align-items: center; height: 16px; border: 1px solid #888; margin-bottom: 1px; }
.nav-head h2 { flex: 1; font-size: 13px; line-height: 14px; }
.shut { width: 18px; height: 14px; margin-left: 4px; display: grid; place-items: center; border-right: 1px solid #555; border-bottom: 1px solid #555; }
.section { height: 22px; padding-top: 1px; border: 1px solid #a0a0a0; border-left-color: #ccc; }
.nav-box { flex: 1; display: flex; flex-direction: column; border: 1px solid #888; border-top: 0; margin: 2px 1px; background: #fff; }
.expanders { height: 26px; display: flex; align-items: center; gap: 5px; padding-left: 5px; background: #f6f6f6; border-bottom: 1px solid #888; }
.scroll-area { flex: 1; display: flex; background: #fff; }
.tree { flex: 1; padding-top: 1px; overflow: hidden; }
.node { display: flex; align-items: center; height: 16px; padding-left: 7px; gap: 5px; }
.exp { width: 10px; height: 8px; margin-right: 1px; }
.tree ul { background: repeating-linear-gradient(#888 0 1px, transparent 1px 2px) 13px 0 / 1px 100% no-repeat; }
.tree > li:last-child ul { background: none; }
.tree ul li {
  display: flex; align-items: center; height: 16px; padding-left: 43px; gap: 3px; white-space: nowrap;
  background: repeating-linear-gradient(#888 0 1px, transparent 1px 2px) 32px 0 / 1px 100% no-repeat, repeating-linear-gradient(90deg, #888 0 1px, transparent 1px 2px) 32px 8px / 11px 1px no-repeat;
}
.tree ul li:last-child { background-size: 1px 8px, 11px 1px; }
.tree span { line-height: 16px; padding: 0 2px; }
.tree span + svg { margin-left: -4px; }
.current { background: #d9d9d9; padding-right: 5px !important; }
.tree em { margin-left: -2px; font: 700 9px/8px "Liberation Sans", sans-serif; background: #ffe100; align-self: flex-start; }
.scrollbar { width: 16px; display: flex; flex-direction: column; align-items: center; background: #f0f0f0; padding: 6px 0; margin: 1px 2px; }
.scrollbar svg { width: 10px; height: 6px; }
.thumb { width: 100%; background: #cdcdcd; }
.nav-thumb { flex: 1; margin: 109px 0 6px; }
.az-thumb { flex: 1; margin: 150px 0 6px; }

.center { width: 447px; padding-left: 4px; display: flex; flex-direction: column; overflow: hidden; }
.comp-tools { height: 28px; padding-left: 4px; white-space: nowrap; }
.comp-tools > * { flex: none; }
.comp-tools .sep { margin-right: 3px; }
.floor { width: 62px; height: 24px; background-color: #fff; margin: 0 4px 0 5px; padding-left: 3px; }
.panes { flex: 1; display: flex; }
.components { width: 185px; display: flex; flex-direction: column; margin: 4px 3px 3px 0; }
.search { display: flex; background: #fff; padding: 2px 0 1px 1px; border-top: 1px solid #ddd; }
.search input { width: 158px; height: 24px; border: 1px solid #777; background: #fff; padding: 0 0 3px 2px; }
.search input::placeholder { color: #777; opacity: 1; }
.search button { flex: 1; display: grid; place-items: center; }
.list-box { border: 1px solid #808590; border-bottom-width: 2px; border-right-width: 2px; }
.az { flex: 1; padding-top: 1px; }
.az li, .az span { display: flex; align-items: center; height: 16px; gap: 8px; font: 10px/16px "DejaVu Sans Mono", monospace; }
.az li {
  padding-left: 43px;
  background: repeating-linear-gradient(#888 0 1px, transparent 1px 2px) 31px 0 / 1px 100% no-repeat, repeating-linear-gradient(90deg, #888 0 1px, transparent 1px 2px) 31px 8px / 11px 1px no-repeat;
}
.az svg { width: 12px; height: 12px; }
.az .picked { background-size: 1px 8px, 11px 1px; padding-left: 40px; }
.picked span { background: #316ac5; padding: 0 4px 0 3px; }
.properties { flex: 1; display: flex; flex-direction: column; }
.tabs { display: flex; align-items: flex-end; }
.tab { height: 19px; padding: 1px 9px 0 6px; border: 1px solid #dcdcdc; border-bottom: 0; background: #f0f0f0; }
.tab.on { height: 21px; background: #fff; }
.properties .tabs { background: #fff; border-left: 1px solid #ddd; }
.properties .tab { border-width: 1px 1px 0 0; }
.prop-box { flex: 1; background: #fff; border: 1px solid #ddd; border-width: 1px 0 0 1px; padding: 4px 0 0 3px; margin-bottom: 3px; }
table { width: 100%; border-collapse: collapse; table-layout: fixed; border: 1px solid #aaa; border-right: 0; }
th { height: 23px; font-weight: 400; padding: 0; background: linear-gradient(#fafafa, #ececec); border: 1px solid #c0c0c0; }
.no { width: 21px; }
.val { width: 39px; background: linear-gradient(#fbd592, #f0c060); border-right: 0; }
td { height: 19px; padding: 1px 0 0 2px; line-height: 16px; border: 1px solid #c0c0c0; border-right: 0; white-space: nowrap; overflow: hidden; }
td tt { line-height: 1px; }
td:first-child { padding: 0; background: #f5f5f5; text-align: center; font: 10px/16px "DejaVu Sans Mono", monospace; }
td:nth-child(2) { padding-left: 20px; }
.key td:nth-child(2) { color: #00f; }
.dim td:not(:first-child) { color: #888; }
.sel td:first-child { background: #ffd68c; }
.sel td:nth-child(2) { background: #0078d7; color: #fff; }
.sel td:nth-child(3) { background: #dcebf9; }
.fold td:nth-child(2) { padding-left: 2px; }
.fold button { width: 13px; height: 13px; margin-right: 5px; border: 1px solid #aaa; color: #000; font: 14px/10px "Liberation Mono", monospace; vertical-align: 1px; }
.grade { display: inline-block; vertical-align: middle; margin: 0 1px; }

.dialog { flex: 1; display: flex; flex-direction: column; background: #b9d1ea; border-left: 1px solid #333; border-bottom: 2px solid #30454f; padding: 0 0 6px 7px; margin-bottom: 7px; min-width: 0; }
.dialog-title { height: 8px; overflow: hidden; background: linear-gradient(#a9c8e8, #b9d1ea); }
.dialog-title span { display: block; margin-top: -11px; }
.dialog-body { flex: 1; display: flex; flex-direction: column; background: #f0f0f0; }
.dialog .tabs { height: 20px; padding: 0 2px; }
.dialog .tab { width: 47px; padding: 2px 5px 0; text-align: left; }
.dialog .tab.on { width: 51px; height: 20px; padding-top: 0; }
.sheet { flex: 1; display: flex; flex-direction: column; border-left: 1px solid #fff; border-top: 1px solid #fff; border-bottom: 1px solid #fff; padding: 3px 0 2px 3px; }
.rebar-tools { height: 26px; gap: 10px; }
.rebar-tools button, .palette button { height: 22px; padding-top: 1px; }
.grip { width: 2px; height: 14px; margin-left: 3px; background: repeating-linear-gradient(#bbb 0 2px, transparent 2px 4px); }
.rebar-tools .grip { margin-right: -3px; }
.rebar-tools .sep { margin: 0 -3px 0 0; }
.rebar-tools .active { margin: 0 -6px; }
.active { padding: 0 4px; border: 1px solid #0078d7 !important; background: #e0ecf7; }
.info-tools { height: 26px; margin: 2px 0 3px; background: none; }
.info-tools label { margin-left: 6px; width: 49px; white-space: nowrap; }
.info { width: 135px; height: 25px; padding-left: 2px; border: 1px solid #0078d7; background-color: #fff; }
.canvas { position: relative; flex: 1; background: #000; border: 2px solid #f00; border-right: 0; overflow: hidden; }
.drawing { width: 100%; }
.bars-y { color: #ff0; }
.bars-m { color: #f0f; }
.figures text { fill: #fff; font: 20px "Liberation Serif", serif; }
.notes text { fill: #fff; font: 300 20px "Noto Sans CJK SC", sans-serif; }
.codes text { fill: #0f0; font: 17px "Liberation Mono", monospace; }
.origin { fill: #555; font: 10px "Liberation Mono", monospace; }
.palette { position: absolute; left: 8px; top: 3px; width: 199px; border: 1px solid #444; border-width: 0 1px 1px 0; border-top: 7px solid #fff; background: #f6f6f6; }
.palette h3 { height: 22px; padding-left: 3px; line-height: 21px; color: #fff; background: #a0a0a0; }
.palette-row { display: flex; align-items: center; height: 25px; padding-left: 5px; gap: 5px; }
.palette button { display: flex; align-items: center; gap: 4px; }
.palette select { flex: 1; height: 23px; border: 1px solid #777; background-color: #f4f4f4; }

.status { display: flex; gap: 2px; }
.status span { height: 20px; padding: 0 2px; line-height: 19px; border: 1px solid #d5d5d5; background: linear-gradient(#fdfdfd, #f3f3f3); white-space: nowrap; overflow: hidden; }
.status .grow { flex: 1; }
.dialog-status { margin-top: 4px; }
.status .coords { width: 146px; padding-left: 8px; }
.coords tt { white-space: pre; }
.s1 { width: 148px; } .s2 { width: 78px; } .s3 { width: 98px; } .s4 { width: 48px; } .s5 { width: 70px; }
.app-status { height: 20px; }

.taskbar { display: flex; height: 40px; background: #000a0d; color: #fff; }
.start { width: 48px; display: grid; place-items: center; background: #000; }
.find { width: 344px; display: flex; align-items: center; gap: 5px; padding: 0 14px 0 9px; background: #333; }
.find input { flex: 1; font-size: 14px; }
.find input::placeholder { color: #999; opacity: 1; }
.apps { width: 545px; display: flex; }
.apps button { flex: 1; display: grid; place-items: center; }
.apps .run { background: linear-gradient(#76b9ed, #76b9ed) center bottom / 40px 2px no-repeat; }
.apps .front { background-color: #363d42; background-size: 100% 2px; }
.cpu { width: 80px; margin-left: 39px; text-align: center; line-height: 17px; padding-top: 3px; }
.tray { display: flex; align-items: center; justify-content: space-between; width: 172px; margin-left: 3px; }
.tray b { font-size: 13px; font-weight: 500; }
.clock { flex: 1; text-align: center; line-height: 18px; padding-top: 2px; }
.notify { position: relative; width: 48px; padding: 12px 8px; background: #000; }
.notify span { position: absolute; left: 11px; top: 19px; width: 22px; height: 17px; border: 1px solid #999; border-radius: 9px; background: #444; font-weight: 700; line-height: 15px; }
```
